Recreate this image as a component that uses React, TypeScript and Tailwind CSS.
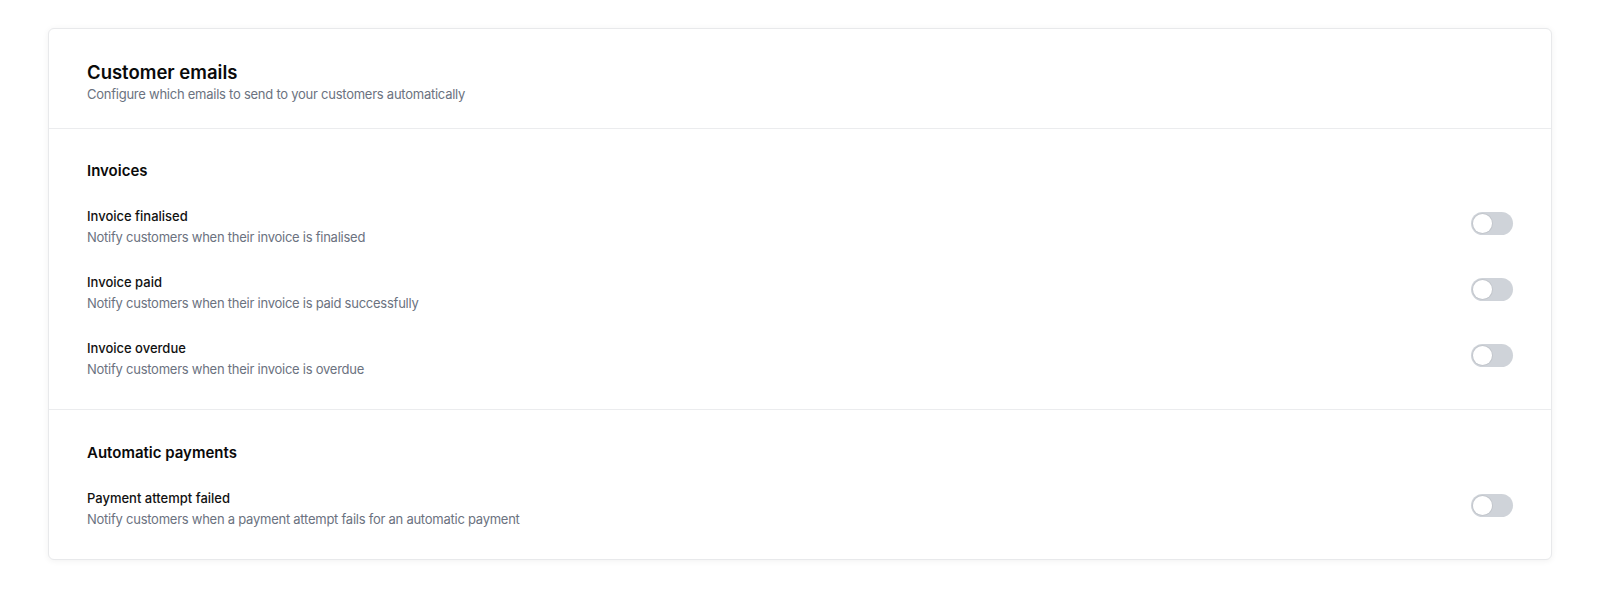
import React from "react";

function Toggle() {
  return (
    <div className="relative mt-[7px] h-[23px] w-[42px] shrink-0 rounded-full bg-[#cfd3d9]">
      <div className="absolute left-[2px] top-[2px] h-[19px] w-[19px] rounded-full bg-white shadow-[0_0_0_1px_rgba(0,0,0,0.06)]" />
    </div>
  );
}

function Row({ title, desc }: { title: string; desc: string }) {
  return (
    <div className="flex items-start justify-between">
      <div className="flex flex-col">
        <div className="text-[13px] leading-[22px] font-medium text-[#111111]">{title}</div>
        <div className="text-[13px] leading-[20px] tracking-[-0.25px] text-[#6b7280]">{desc}</div>
      </div>
      <Toggle />
    </div>
  );
}

export default function App() {
  return (
    <div className="min-h-screen bg-white px-12 pt-[28px] pb-12 font-['Inter',sans-serif]">
      <div className="rounded-md border border-[#e8e9eb] bg-white shadow-[0_1px_6px_rgba(0,0,0,0.06)]">
        <div className="border-b border-[#ebecee] px-[38px] pt-[31px] pb-[24px]">
          <div className="text-[18.5px] leading-[24px] font-semibold text-[#0a0a0a]">Customer emails</div>
          <div className="text-[13px] leading-[20px] tracking-[-0.25px] text-[#6b7280]">
            Configure which emails to send to your customers automatically
          </div>
        </div>
        <div className="border-b border-[#ebecee] px-[38px] pt-8 pb-[30px]">
          <div className="text-[15px] leading-[20px] font-semibold text-[#0a0a0a]">Invoices</div>
          <div className="mt-[24px] flex flex-col gap-[24px]">
            <Row title="Invoice finalised" desc="Notify customers when their invoice is finalised" />
            <Row title="Invoice paid" desc="Notify customers when their invoice is paid successfully" />
            <Row title="Invoice overdue" desc="Notify customers when their invoice is overdue" />
          </div>
        </div>
        <div className="px-[38px] pt-[33px] pb-[30px]">
          <div className="text-[15px] leading-[20px] font-semibold text-[#0a0a0a]">Automatic payments</div>
          <div className="mt-[24px] flex flex-col gap-[24px]">
            <Row
              title="Payment attempt failed"
              desc="Notify customers when a payment attempt fails for an automatic payment"
            />
          </div>
        </div>
      </div>
    </div>
  );
}
